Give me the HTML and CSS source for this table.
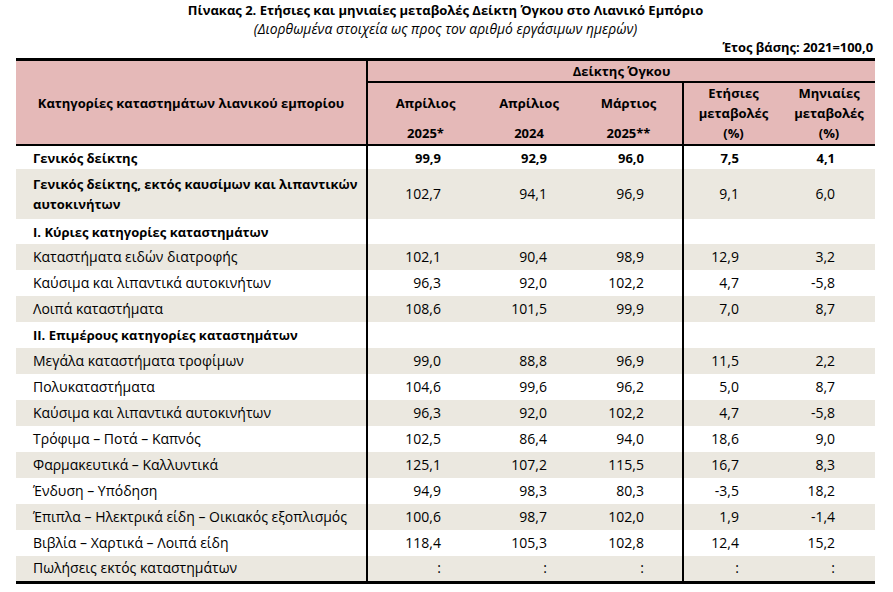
FILE: index.html
```html
<!DOCTYPE html>
<html lang="el">
<head>
<meta charset="utf-8">
<title>Πίνακας 2</title>
<link rel="stylesheet" href="styles.css">
</head>
<body>
<div class="page">
  <div class="title">Πίνακας 2. Ετήσιες και μηνιαίες μεταβολές Δείκτη Όγκου στο Λιανικό Εμπόριο</div>
  <div class="subtitle">(Διορθωμένα στοιχεία ως προς τον αριθμό εργάσιμων ημερών)</div>
  <div class="base">Έτος βάσης: 2021=100,0</div>
  <table class="tbl">
    <colgroup>
      <col class="c1"><col class="c2"><col class="c3"><col class="c4"><col class="c5"><col class="c6">
    </colgroup>
    <thead>
      <tr class="h1">
        <th rowspan="2" class="cat vline">Κατηγορίες καταστημάτων λιανικού εμπορίου</th>
        <th colspan="5" class="group">Δείκτης Όγκου</th>
      </tr>
      <tr class="h2">
        <th><div class="top">Απρίλιος</div><div class="bot">2025*</div></th>
        <th><div class="top">Απρίλιος</div><div class="bot">2024</div></th>
        <th class="vline"><div class="top">Μάρτιος</div><div class="bot">2025**</div></th>
        <th><div class="ln">Ετήσιες</div><div class="ln">μεταβολές</div><div class="ln">(%)</div></th>
        <th><div class="ln">Μηνιαίες</div><div class="ln">μεταβολές</div><div class="ln">(%)</div></th>
      </tr>
    </thead>
    <tbody>
      <tr class="r first b"><td class="lbl vline">Γενικός δείκτης</td><td class="n2">99,9</td><td class="n3">92,9</td><td class="n4 vline">96,0</td><td class="n5">7,5</td><td class="n6">4,1</td></tr>
      <tr class="r two b alt"><td class="lbl wrap vline">Γενικός δείκτης, εκτός καυσίμων και λιπαντικών αυτοκινήτων</td><td class="n2 nb">102,7</td><td class="n3 nb">94,1</td><td class="n4 vline nb">96,9</td><td class="n5 nb">9,1</td><td class="n6 nb">6,0</td></tr>
      <tr class="r sec b"><td class="lbl vline">I. Κύριες κατηγορίες καταστημάτων</td><td></td><td></td><td class="vline"></td><td></td><td></td></tr>
      <tr class="r alt"><td class="lbl vline">Καταστήματα ειδών διατροφής</td><td class="n2">102,1</td><td class="n3">90,4</td><td class="n4 vline">98,9</td><td class="n5">12,9</td><td class="n6">3,2</td></tr>
      <tr class="r"><td class="lbl vline">Καύσιμα και λιπαντικά αυτοκινήτων</td><td class="n2">96,3</td><td class="n3">92,0</td><td class="n4 vline">102,2</td><td class="n5">4,7</td><td class="n6">-5,8</td></tr>
      <tr class="r alt"><td class="lbl vline">Λοιπά καταστήματα</td><td class="n2">108,6</td><td class="n3">101,5</td><td class="n4 vline">99,9</td><td class="n5">7,0</td><td class="n6">8,7</td></tr>
      <tr class="r b"><td class="lbl vline">II. Επιμέρους κατηγορίες καταστημάτων</td><td></td><td></td><td class="vline"></td><td></td><td></td></tr>
      <tr class="r alt"><td class="lbl vline">Μεγάλα καταστήματα τροφίμων</td><td class="n2">99,0</td><td class="n3">88,8</td><td class="n4 vline">96,9</td><td class="n5">11,5</td><td class="n6">2,2</td></tr>
      <tr class="r"><td class="lbl vline">Πολυκαταστήματα</td><td class="n2">104,6</td><td class="n3">99,6</td><td class="n4 vline">96,2</td><td class="n5">5,0</td><td class="n6">8,7</td></tr>
      <tr class="r alt"><td class="lbl vline">Καύσιμα και λιπαντικά αυτοκινήτων</td><td class="n2">96,3</td><td class="n3">92,0</td><td class="n4 vline">102,2</td><td class="n5">4,7</td><td class="n6">-5,8</td></tr>
      <tr class="r"><td class="lbl vline">Τρόφιμα – Ποτά – Καπνός</td><td class="n2">102,5</td><td class="n3">86,4</td><td class="n4 vline">94,0</td><td class="n5">18,6</td><td class="n6">9,0</td></tr>
      <tr class="r alt"><td class="lbl vline">Φαρμακευτικά – Καλλυντικά</td><td class="n2">125,1</td><td class="n3">107,2</td><td class="n4 vline">115,5</td><td class="n5">16,7</td><td class="n6">8,3</td></tr>
      <tr class="r"><td class="lbl vline">Ένδυση – Υπόδηση</td><td class="n2">94,9</td><td class="n3">98,3</td><td class="n4 vline">80,3</td><td class="n5">-3,5</td><td class="n6">18,2</td></tr>
      <tr class="r alt"><td class="lbl vline">Έπιπλα – Ηλεκτρικά είδη – Οικιακός εξοπλισμός</td><td class="n2">100,6</td><td class="n3">98,7</td><td class="n4 vline">102,0</td><td class="n5">1,9</td><td class="n6">-1,4</td></tr>
      <tr class="r"><td class="lbl vline">Βιβλία – Χαρτικά – Λοιπά είδη</td><td class="n2">118,4</td><td class="n3">105,3</td><td class="n4 vline">102,8</td><td class="n5">12,4</td><td class="n6">15,2</td></tr>
      <tr class="r alt last"><td class="lbl vline">Πωλήσεις εκτός καταστημάτων</td><td class="n2">:</td><td class="n3">:</td><td class="n4 vline">:</td><td class="n5">:</td><td class="n6">:</td></tr>
    </tbody>
  </table>
</div>
</body>
</html>
```
FILE: styles.css
```css
* { box-sizing: border-box; }
html, body { margin: 0; padding: 0; background: #fff; }
body {
  font-family: "Open Sans", "Noto Sans", "Liberation Sans", sans-serif;
  color: #000;
  font-size: 14px;
}
.page { width: 893px; padding: 0 0 0 16px; }
.title {
  width: 859px;
  text-align: center;
  font-weight: bold;
  font-size: 13px;
  line-height: 20px;
  height: 20px;
  margin-top: 0;
}
.subtitle {
  width: 859px;
  text-align: center;
  font-style: italic;
  font-size: 13.9px;
  line-height: 17px;
  height: 18px;
}
.base {
  width: 859px;
  text-align: right;
  font-weight: bold;
  font-size: 12.9px;
  line-height: 18px;
  height: 18px;
  padding-right: 2px;
}
.tbl {
  width: 859px;
  border-collapse: collapse;
  table-layout: fixed;
  border-top: 3px solid #000;
  border-bottom: 3px solid #000;
  margin-top: 2px;
}
.c1 { width: 351px; }
.c2 { width: 116px; }
.c3 { width: 92px; }
.c4 { width: 108px; }
.c5 { width: 100px; }
.c6 { width: 92px; }
th, td { padding: 0; }
thead th {
  background: #e5b9b8;
  font-weight: bold;
  text-align: center;
  vertical-align: top;
  font-size: 13px;
}
.h1 { height: 22px; }
.h1 .group { line-height: 20px; border-bottom: 2px solid #000; }
.h1 .cat { vertical-align: middle; border-bottom: 2px solid #000; }
.h2 th { border-bottom: 2px solid #000; height: 63px; line-height: 20px; }
.h2 .top { height: 40px; display: flex; align-items: center; justify-content: center; }
.h2 .bot { height: 20px; }
.h2 .ln { height: 20px; }
.vline { border-right: 2px solid #000; }
.r td { height: 26px; line-height: 20px; vertical-align: middle; white-space: nowrap; }
.r.first td { height: 24px; }
.r.sec td { height: 25px; }
.r.two td { height: 50px; }
.r td.wrap { white-space: normal; }
.alt td { background: #ebe8e0; }
.b td { font-weight: bold; font-size: 13px; }
.b td.nb { font-weight: normal; font-size: 14px; }
.lbl { padding-left: 17px !important; padding-right: 0 !important; text-align: left; }
.n2, .n3, .n4, .n5, .n6 { text-align: right; }
.n2 { padding-right: 42px !important; }
.n3 { padding-right: 28px !important; }
.n4 { padding-right: 38px !important; }
.n5 { padding-right: 44px !important; }
.n6 { padding-right: 40px !important; }
```
